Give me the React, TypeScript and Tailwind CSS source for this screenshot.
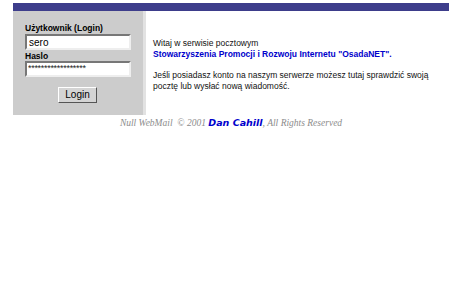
import React from 'react';

export default function App() {
  return (
    <div className="w-[471px] h-[293px] bg-white pt-[3px] pl-[13px]" style={{ fontFamily: '"Liberation Sans", Arial, sans-serif' }}>
      <div className="w-[436px]">
        {/* Top bar */}
        <div className="h-[8px] bg-[#3d3d8b]" />

        <div className="flex">
          {/* Login panel */}
          <div className="w-[133px] h-[104px] bg-[#cccccc] border-r-[3px] border-[#e2e2e2] pl-[12px] pt-[12px]">
            <div className="text-[8.5px] font-bold leading-[10px] text-black">Użytkownik (Login)</div>
            <input
              readOnly
              value="sero"
              className="mt-[1px] block w-[106px] h-[16px] bg-white border-2 border-t-[#777] border-l-[#777] border-b-[#eee] border-r-[#eee] px-[2px] text-[10px] leading-[12px] text-black outline-none"
            />
            <div className="text-[8.5px] font-bold leading-[10px] mt-[1px] text-black">Haslo</div>
            <input
              readOnly
              value="******************"
              className="block w-[106px] h-[16px] bg-white border-2 border-t-[#777] border-l-[#777] border-b-[#eee] border-r-[#eee] px-[1px] pb-[2px] text-[9px] leading-[10px] tracking-[-0.3px] text-[#222] outline-none"
            />
            <div className="pl-[33px] mt-[10px]">
              <button className="block w-[39px] h-[16px] bg-[#d4d4d4] border border-t-white border-l-white border-b-[#555] border-r-[#555] text-[10px] leading-[14px] text-black">
                Login
              </button>
            </div>
          </div>

          {/* Welcome text */}
          <div className="pl-[7px] pt-[27px] text-[8.5px] leading-[10.5px] text-[#111]">
            <div>Witaj w serwisie pocztowym</div>
            <div className="font-bold text-[#0000cc]">Stowarzyszenia Promocji i Rozwoju Internetu "OsadaNET".</div>
            <div className="mt-[11px]">Jeśli posiadasz konto na naszym serwerze możesz tutaj sprawdzić swoją</div>
            <div>pocztę lub wysłać nową wiadomość.</div>
          </div>
        </div>

        {/* Footer */}
        <div
          className="text-center italic text-[9.5px] text-[#8c8c8c] mt-[1px]"
          style={{ fontFamily: '"Liberation Serif", "Times New Roman", serif' }}
        >
          Null WebMail &nbsp;© 2001{' '}
          <span className="font-bold text-[#0000cc]" style={{ fontFamily: '"DejaVu Sans", Verdana, sans-serif' }}>Dan Cahill</span>
          , All Rights Reserved
        </div>
      </div>
    </div>
  );
}
